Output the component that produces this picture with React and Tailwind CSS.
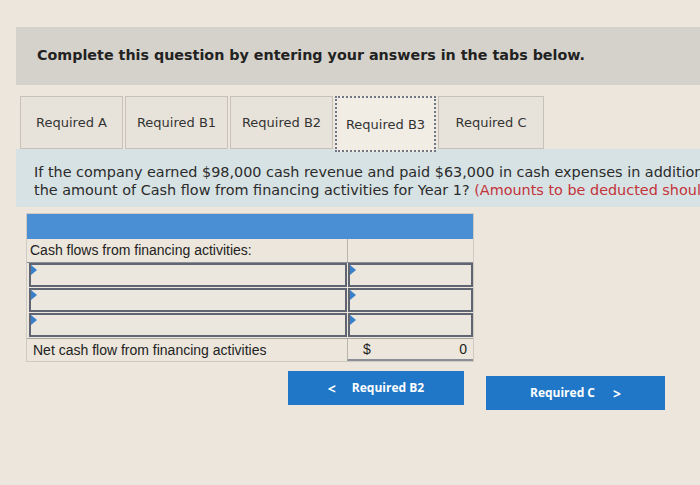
import React from 'react';

const tabs = [
  { label: 'Required A', w: 'w-[103px]' },
  { label: 'Required B1', w: 'w-[103px]' },
  { label: 'Required B2', w: 'w-[103px]' },
  { label: 'Required B3', w: 'w-[101px]', active: true },
  { label: 'Required C', w: 'w-[106px]' },
];

const Marker = () => (
  <span className="absolute left-0 top-0 w-0 h-0 border-t-[5px] border-b-[5px] border-l-[6px] border-t-transparent border-b-transparent border-l-[#3a7fc9]" />
);

const InputRow = () => (
  <div className="flex h-[24px] mb-[1px]">
    <div className="relative w-[318px] ml-[2px] border-2 border-[#5f6672] bg-[#ebe6de]">
      <Marker />
    </div>
    <div className="relative w-[125px] ml-[1px] border-2 border-[#5f6672] bg-[#ebe6de]">
      <Marker />
    </div>
  </div>
);

export default function App() {
  return (
    <div className="w-[700px] h-[485px] overflow-hidden bg-[#ece6dc] pt-[27px]">
      {/* banner */}
      <div className="ml-[16px] h-[58px] bg-[#d5d2cb] flex items-center pl-[21px]">
        <p className="text-[14.3px] font-bold text-[#222] font-['DejaVu_Sans',sans-serif]">
          Complete this question by entering your answers in the tabs below.
        </p>
      </div>

      {/* tabs */}
      <div className="flex ml-[20px] mt-[11px] items-start gap-[2px]">
        {tabs.map((t) =>
          t.active ? (
            <div
              key={t.label}
              className={`${t.w} h-[56px] border-2 border-dotted border-[#6f7686] bg-[#f1ece4] flex items-center justify-center pt-[2px] text-[13px] text-[#333] font-['DejaVu_Sans',sans-serif] relative z-10`}
            >
              {t.label}
            </div>
          ) : (
            <div
              key={t.label}
              className={`${t.w} h-[53px] border border-[#c6c2ba] bg-[#e8e3da] flex items-center justify-center text-[13px] text-[#333] font-['DejaVu_Sans',sans-serif]`}
            >
              {t.label}
            </div>
          )
        )}
      </div>

      {/* question */}
      <div className="ml-[16px] -mt-[3px] h-[58px] bg-[#d7e2e4] pl-[18px] pt-[14px] overflow-hidden whitespace-nowrap">
        <p className="text-[14.4px] leading-[18px] text-[#2b2b2b] font-['DejaVu_Sans',sans-serif]">
          If the company earned $98,000 cash revenue and paid $63,000 in cash expenses in addition
        </p>
        <p className="text-[14.4px] leading-[18px] text-[#2b2b2b] font-['DejaVu_Sans',sans-serif]">
          the amount of Cash flow from financing activities for Year 1?{' '}
          <span className="text-[#c4323a]">(Amounts to be deducted should</span>
        </p>
      </div>

      {/* table */}
      <div className="ml-[26px] mt-[6px] w-[448px] border border-[#cfcac2] font-['Liberation_Sans',sans-serif] text-[14px] text-[#222]">
        <div className="h-[25px] bg-[#4a8fd4]" />
        <div className="flex h-[24px] border-b border-[#8a8e96]">
          <div className="w-[320px] flex items-center pl-[3px]">Cash flows from financing activities:</div>
          <div className="flex-1 border-l border-[#b9b5ae]" />
        </div>
        <InputRow />
        <InputRow />
        <InputRow />
        <div className="flex h-[23px] border-t border-[#a9a5a0]">
          <div className="w-[320px] flex items-center pl-[6px]">Net cash flow from financing activities</div>
          <div className="flex-1 border-l border-[#b9b5ae] border-b-2 border-b-[#8a8e96] flex items-center justify-between pl-[15px] pr-[6px]">
            <span>$</span>
            <span>0</span>
          </div>
        </div>
      </div>

      {/* nav buttons */}
      <div className="flex ml-[288px] mt-[9px] gap-[22px] font-['Open_Sans',sans-serif]">
        <button className="w-[176px] h-[34px] bg-[#2177c7] text-white text-[12px] font-bold flex items-center justify-center gap-[16px]">
          <span className="text-[14px]">&lt;</span>
          <span>Required B2</span>
        </button>
        <button className="w-[179px] h-[34px] mt-[5px] bg-[#2177c7] text-white text-[12px] font-bold flex items-center justify-center gap-[18px]">
          <span>Required C</span>
          <span className="text-[14px]">&gt;</span>
        </button>
      </div>
    </div>
  );
}
